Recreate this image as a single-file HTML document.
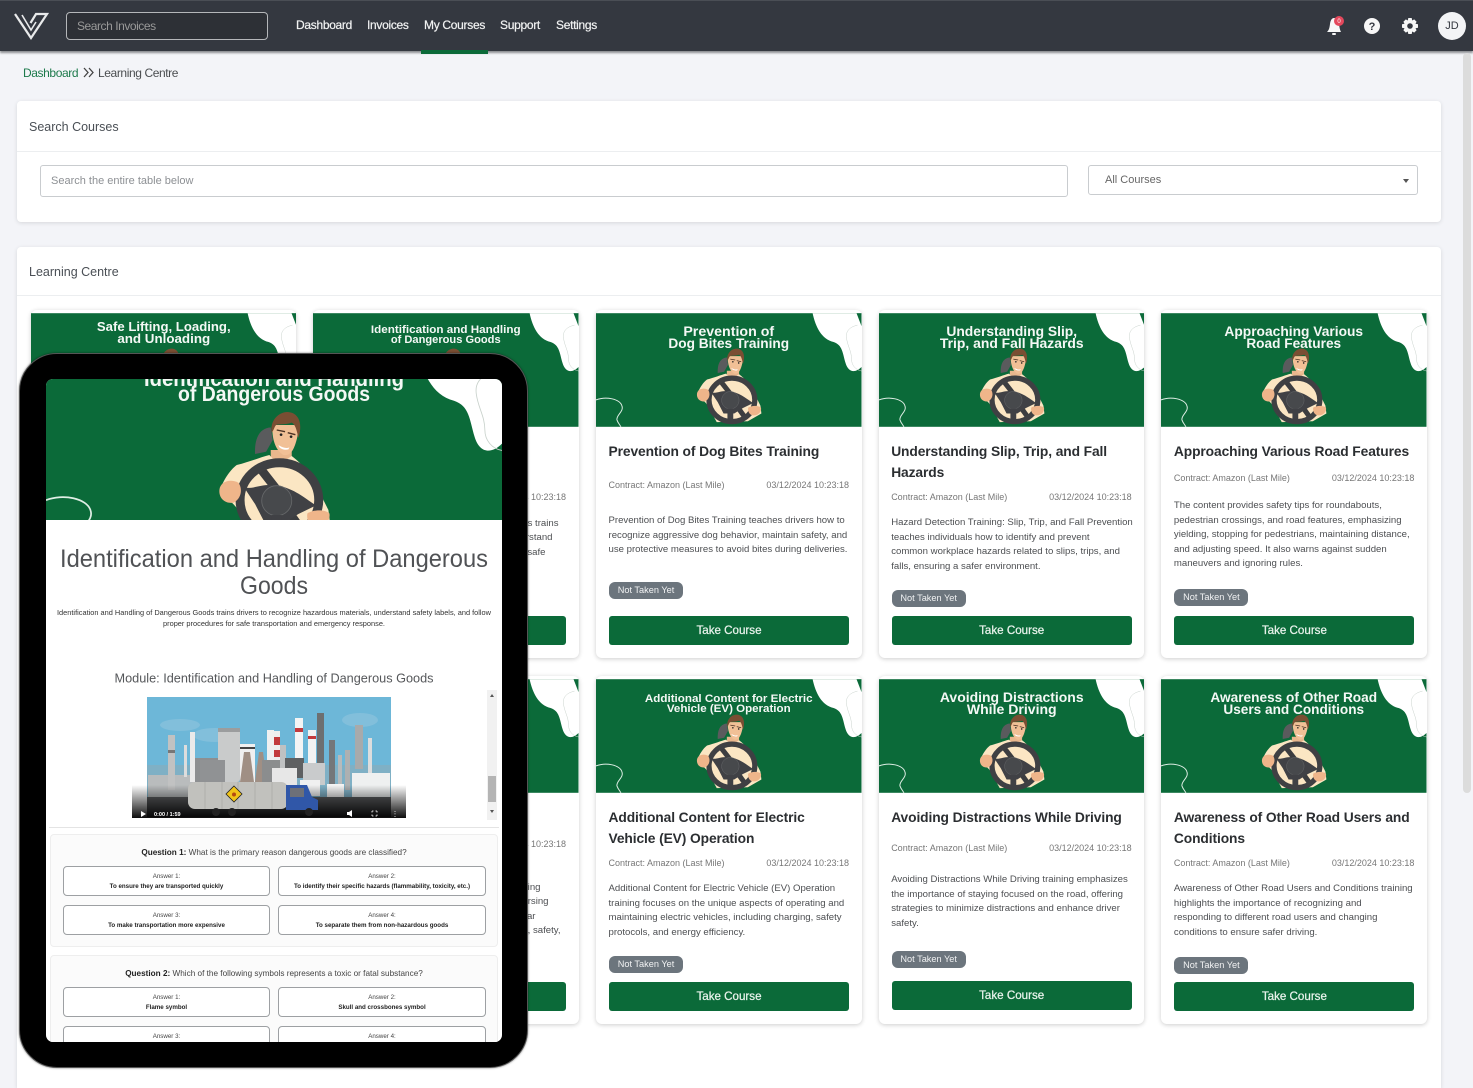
<!DOCTYPE html>
<html lang="en"><head><meta charset="utf-8"><title>Learning Centre</title>
<style>
*{box-sizing:border-box}
html,body{margin:0;padding:0;width:1473px;height:1088px;overflow:hidden;background:#f3f4f8;font-family:"Liberation Sans",sans-serif;color:#333}
#root{position:absolute;left:0;top:0;width:1473px;height:1088px;overflow:hidden}
.abs,.card,.panel{position:absolute}
header{position:absolute;left:0;top:0;width:1473px;height:51px;background:#343840;box-shadow:inset 0 1px 0 #4a4e55,0 2px 2px #8b8d90}
.nav{position:absolute;top:17px;font-size:12px;line-height:16px;color:#f2f3f3;white-space:nowrap;letter-spacing:-.3px;-webkit-text-stroke:.2px #f2f3f3}
.sb{position:absolute;left:66px;top:12px;width:202px;height:28px;border:1px solid #b5b7ba;border-radius:4px;background:#2d3036;color:#999;font-size:12px;line-height:26px;padding-left:10px;letter-spacing:-.45px}
.panel{background:#fff;border-radius:4px;box-shadow:0 1px 4px rgba(0,0,0,.12);left:17px;width:1424px}
.ph{position:absolute;left:12px;font-size:12.5px;line-height:16px;color:#4a4f55}
.hr{position:absolute;left:0;width:100%;height:1px;background:#eceef0}
.card{width:265.5px;height:348px;background:#fff;border-radius:6px;box-shadow:0 1px 5px rgba(0,0,0,.2)}
.bn{position:absolute;left:0;top:3px;width:265.5px;height:114px;display:block}
.bn text,.tb text{font-family:"Liberation Sans",sans-serif;font-weight:700;fill:#f4f8f5;text-anchor:middle}
.t{position:absolute;left:12.5px;margin-top:.5px;width:245px;font-size:13.8px;line-height:21px;font-weight:700;color:#2b2e31;white-space:nowrap;letter-spacing:-.1px}
.m{position:absolute;left:12.5px;width:240.5px;font-size:9px;line-height:14px;color:#777;white-space:nowrap}
.m b{position:absolute;right:0;top:0;font-weight:400}
.d{position:absolute;left:12.5px;margin-top:1.5px;font-size:9.6px;line-height:14.5px;color:#4d4f52;white-space:nowrap}
.bd{position:absolute;left:13px;height:17px;width:74px;background:#6c757d;border-radius:6px;color:#f1f2f3;font-size:9.2px;line-height:17px;text-align:center}
.btn{position:absolute;left:13px;width:240px;height:29px;background:#0b6a39;border-radius:3px;color:#e9f3ec;font-size:11.6px;line-height:30px;text-align:center;-webkit-text-stroke:.25px #e9f3ec}
.tablet{position:absolute;left:19px;top:353px;width:509px;height:715px;background:#000;border-radius:38px;border:1px solid #555;box-shadow:0 0 2px rgba(0,0,0,.5)}
.screen{position:absolute;left:26px;top:25px;width:456px;height:663px;background:#fff;border-radius:7px;overflow:hidden}
.q{position:absolute;left:4px;width:448px;background:#fbfbfb;border:1px solid #eee;border-radius:4px}
.qt{position:absolute;left:0;width:100%;text-align:center;font-size:8.2px;line-height:12px;color:#444;white-space:nowrap}
.qt b{color:#222}
.a{position:absolute;height:30px;background:#fff;border:1px solid #9da0a3;border-radius:4px;text-align:center;font-size:6.2px;line-height:9.5px;color:#444;padding-top:5px;white-space:nowrap}
.a b{display:block;color:#222}
</style></head>
<body>
<div id="root">
<svg width="0" height="0" style="position:absolute">
<defs>
<symbol id="art" viewBox="0 0 266 114">
<rect width="266" height="114" fill="#0b6a39"/>
<path d="M217 0C220 14 226 26 238 29C247 32 247 40 250 50C253 60 260 60 266 54V0Z" fill="#fff"/>
<path d="M261 0L266 13V0Z" fill="#0b6a39"/>
<path d="M262 12C254 14 250 18 251 25C252 33 256 38 256 46C256 52 260 57 266 58" fill="none" stroke="#c9d2cc" stroke-width=".5"/>
<path d="M0 87C10 83 24 86 26 93C28 99 20 102 21 107C22 110 24 112 25 114" fill="none" stroke="#dfeee5" stroke-width="1"/>
<g transform="translate(-15.17 -.62) scale(.1945)">
<path d="M752 232C715 235 703 270 705 312L738 305L758 270Z" fill="#5a5b5d"/>
<path d="M752 300H815V350H752Z" fill="#e9b78d"/>
<path d="M650 345C690 335 720 322 748 315L775 345L815 318C850 345 880 380 895 420L925 480L930 520L860 560L700 565L670 510C660 470 620 450 600 420C610 390 630 360 650 345Z" fill="#fbe6c3"/>
<path d="M757 225C755 265 765 300 790 315C815 320 825 290 832 260L835 225Z" fill="#f1c096"/>
<path d="M755 248C748 205 785 180 810 187C838 192 848 225 835 264C830 240 825 222 815 218C795 225 775 222 768 225C762 232 762 240 755 248Z" fill="#7a4e33"/>
<path d="M770 240L795 245M803 248L826 254" stroke="#4d3325" stroke-width="4"/>
<circle cx="783" cy="254" r="4" fill="#222"/><circle cx="813" cy="260" r="4" fill="#222"/>
<path d="M775 285Q795 298 808 292L805 298Q790 302 778 292Z" fill="#fff"/>
<path d="M715 348L775 425M795 470L845 540" stroke="#3c3d40" stroke-width="26" fill="none"/>
<path d="M672 412C700 420 730 396 780 408C830 420 860 450 888 466L835 492L790 520L735 520L705 462Z" fill="#404145"/>
<circle cx="770" cy="452" r="45" fill="#47494c" stroke="#66686a" stroke-width="2.500"/>
<path d="M770 495V565" stroke="#404145" stroke-width="30"/>
<ellipse cx="778" cy="450" rx="118" ry="112" fill="none" stroke="#3f4043" stroke-width="27"/>
<path d="M598 420C600 395 630 385 655 398C668 415 665 445 640 458C615 462 596 445 598 420Z" fill="#efb58a"/>
<path d="M862 490C880 478 915 478 928 490C932 510 915 530 890 530C870 530 858 510 862 490Z" fill="#efb58a"/>
</g>
</symbol>
</defs>
</svg>

<header>
<svg class="abs" style="left:13px;top:12px" width="36" height="28" viewBox="0 0 36 28"><path d="M2 2L18 26L34 2H23L17.500 11" fill="none" stroke="#e9eaeb" stroke-width="2.200"/><path d="M9 3L18 18L23 10" fill="none" stroke="#e9eaeb" stroke-width="1.600"/></svg>
<div class="sb">Search Invoices</div>
<div class="nav" style="left:296px">Dashboard</div>
<div class="nav" style="left:367px">Invoices</div>
<div class="nav" style="left:424px">My Courses</div>
<div class="nav" style="left:500px">Support</div>
<div class="nav" style="left:556px">Settings</div>
<div class="abs" style="left:421px;top:50px;width:67px;height:4px;background:#0b6a39"></div>
<svg class="abs" style="left:1320px;top:10px" width="30" height="30" viewBox="0 0 30 30">
<path d="M7 22C9 20 9.500 18 10 14C10.500 10 12 8 14 8C17 8 18.500 10 19 14C19.500 18 20 20 21 22Z" fill="#f7f7f7"/><rect x="12" y="23" width="4" height="2" rx="1" fill="#f7f7f7"/>
<circle cx="19" cy="11" r="5" fill="#e4485c"/><text x="19" y="13" font-size="6" fill="#fff" text-anchor="middle" font-family="Liberation Sans">0</text></svg>
<svg class="abs" style="left:1362px;top:16px" width="20" height="20"><circle cx="10" cy="10" r="8" fill="#f7f7f7"/><text x="10" y="14" font-size="11" font-weight="700" fill="#343840" text-anchor="middle" font-family="Liberation Sans">?</text></svg>
<svg class="abs" style="left:1400px;top:16px" width="20" height="20" viewBox="0 0 20 20"><path d="M8.300 2H11.700L12.200 4.500L14.200 3.400L16.600 5.800L15.500 7.800L18 8.300V11.700L15.500 12.200L16.600 14.200L14.200 16.600L12.200 15.500L11.700 18H8.300L7.800 15.500L5.800 16.600L3.400 14.200L4.500 12.200L2 11.700V8.300L4.500 7.800L3.400 5.800L5.800 3.400L7.800 4.500Z" fill="#f7f7f7"/><circle cx="10" cy="10" r="2.800" fill="#343840"/></svg>
<div class="abs" style="left:1438px;top:12px;width:28px;height:28px;border-radius:50%;background:#f3f4f6;color:#343840;font-size:11px;line-height:28px;text-align:center">JD</div>
</header>

<div class="abs" style="left:23px;top:65px;font-size:12px;line-height:16px;color:#1d7a4c;letter-spacing:-.4px">Dashboard</div>
<svg class="abs" style="left:83px;top:67px" width="11" height="11"><path d="M1 1L5 5.500L1 10M6 1L10 5.500L6 10" fill="none" stroke="#444" stroke-width="1.300"/></svg>
<div class="abs" style="left:98px;top:65px;font-size:12px;line-height:16px;color:#4a4d50;letter-spacing:-.4px;white-space:nowrap">Learning Centre</div>

<div class="abs" style="left:1463px;top:53px;width:8px;height:740px;background:#dcdcdc;border-radius:4px"></div>

<div class="panel" style="top:101px;height:121px">
<div class="ph" style="top:18px">Search Courses</div>
<div class="hr" style="top:50px"></div>
<div class="abs" style="left:23px;top:64px;width:1028px;height:32px;border:1px solid #c9cccf;border-radius:3px;color:#8d9094;font-size:11px;line-height:30px;padding-left:10px">Search the entire table below</div>
<div class="abs" style="left:1071px;top:64px;width:330px;height:30px;border:1px solid #c9cccf;border-radius:3px;color:#666;font-size:11px;line-height:28px;padding-left:16px">All Courses<span class="abs" style="right:8px;top:13px;width:0;height:0;border:3px solid transparent;border-top:4px solid #555"></span></div>
</div>

<div class="panel" style="top:247px;height:841px;border-radius:4px 4px 0 0">
<div class="ph" style="top:17px">Learning Centre</div>
<div class="hr" style="top:48px"></div>
</div>

<!-- row 1 -->
<div class="card" style="left:30.500px;top:310px">
<svg class="bn" viewBox="0 0 266 114"><use href="#art" width="266" height="114"/><text x="133" y="18" font-size="13" textLength="134" lengthAdjust="spacingAndGlyphs">Safe Lifting, Loading,</text><text x="133" y="30" font-size="13" textLength="93" lengthAdjust="spacingAndGlyphs">and Unloading</text></svg>
</div>

<div class="card" style="left:313px;top:310px">
<svg class="bn" viewBox="0 0 266 114"><use href="#art" width="266" height="114"/><text x="133" y="20" font-size="11" textLength="150" lengthAdjust="spacingAndGlyphs">Identification and Handling</text><text x="133" y="30" font-size="11" textLength="110" lengthAdjust="spacingAndGlyphs">of Dangerous Goods</text></svg>
<div class="m" style="top:180px"><b>03/12/2024 10:23:18</b></div>
<div class="d" style="left:auto;right:20px;top:205px;text-align:right">Goods trains<br>understand<span style="margin-right:6px"></span><br>follow safe<span style="margin-right:13px"></span></div>
<div class="btn" style="top:306px">Take Course</div>
</div>

<div class="card" style="left:596px;top:310px">
<svg class="bn" viewBox="0 0 266 114"><use href="#art" width="266" height="114"/><text x="133" y="23" font-size="13.500" textLength="91" lengthAdjust="spacingAndGlyphs">Prevention of</text><text x="133" y="35" font-size="13.500" textLength="121" lengthAdjust="spacingAndGlyphs">Dog Bites Training</text></svg>
<div class="t" style="top:130.500px">Prevention of Dog Bites Training</div>
<div class="m" style="top:168px">Contract: Amazon (Last Mile)<b>03/12/2024 10:23:18</b></div>
<div class="d" style="top:202.750px">Prevention of Dog Bites Training teaches drivers how to<br>recognize aggressive dog behavior, maintain safety, and<br>use protective measures to avoid bites during deliveries.</div>
<div class="bd" style="top:272px">Not Taken Yet</div>
<div class="btn" style="top:306px">Take Course</div>
</div>

<div class="card" style="left:878.700px;top:310px">
<svg class="bn" viewBox="0 0 266 114"><use href="#art" width="266" height="114"/><text x="133" y="23" font-size="13.500" textLength="131" lengthAdjust="spacingAndGlyphs">Understanding Slip,</text><text x="133" y="35" font-size="13.500" textLength="144" lengthAdjust="spacingAndGlyphs">Trip, and Fall Hazards</text></svg>
<div class="t" style="top:130.500px">Understanding Slip, Trip, and Fall<br>Hazards</div>
<div class="m" style="top:180px">Contract: Amazon (Last Mile)<b>03/12/2024 10:23:18</b></div>
<div class="d" style="top:204.750px">Hazard Detection Training: Slip, Trip, and Fall Prevention<br>teaches individuals how to identify and prevent<br>common workplace hazards related to slips, trips, and<br>falls, ensuring a safer environment.</div>
<div class="bd" style="top:280px">Not Taken Yet</div>
<div class="btn" style="top:306px">Take Course</div>
</div>

<div class="card" style="left:1161.400px;top:310px">
<svg class="bn" viewBox="0 0 266 114"><use href="#art" width="266" height="114"/><text x="133" y="23" font-size="13.500" textLength="139" lengthAdjust="spacingAndGlyphs">Approaching Various</text><text x="133" y="35" font-size="13.500" textLength="95" lengthAdjust="spacingAndGlyphs">Road Features</text></svg>
<div class="t" style="top:130.500px">Approaching Various Road Features</div>
<div class="m" style="top:161px">Contract: Amazon (Last Mile)<b>03/12/2024 10:23:18</b></div>
<div class="d" style="top:187.750px">The content provides safety tips for roundabouts,<br>pedestrian crossings, and road features, emphasizing<br>yielding, stopping for pedestrians, maintaining distance,<br>and adjusting speed. It also warns against sudden<br>maneuvers and ignoring rules.</div>
<div class="bd" style="top:279px">Not Taken Yet</div>
<div class="btn" style="top:306px">Take Course</div>
</div>

<!-- row 2 -->
<div class="card" style="left:313px;top:676px">
<svg class="bn" viewBox="0 0 266 114"><use href="#art" width="266" height="114"/></svg>
<div class="m" style="top:161px"><b>03/12/2024 10:23:18</b></div>
<div class="d" style="left:auto;right:18px;top:203px;text-align:right">during training<span style="margin-right:20px"></span><br>nursing<span style="margin-right:12px"></span><br>similar<span style="margin-right:25px"></span><br>of road, safety,</div>
<div class="btn" style="top:306px">Take Course</div>
</div>

<div class="card" style="left:596px;top:676px">
<svg class="bn" viewBox="0 0 266 114"><use href="#art" width="266" height="114"/><text x="133" y="23" font-size="11.500" textLength="168" lengthAdjust="spacingAndGlyphs">Additional Content for Electric</text><text x="133" y="33" font-size="11.500" textLength="124" lengthAdjust="spacingAndGlyphs">Vehicle (EV) Operation</text></svg>
<div class="t" style="top:130.500px">Additional Content for Electric<br>Vehicle (EV) Operation</div>
<div class="m" style="top:180px">Contract: Amazon (Last Mile)<b>03/12/2024 10:23:18</b></div>
<div class="d" style="top:204.750px">Additional Content for Electric Vehicle (EV) Operation<br>training focuses on the unique aspects of operating and<br>maintaining electric vehicles, including charging, safety<br>protocols, and energy efficiency.</div>
<div class="bd" style="top:280px">Not Taken Yet</div>
<div class="btn" style="top:306px">Take Course</div>
</div>

<div class="card" style="left:878.700px;top:676px">
<svg class="bn" viewBox="0 0 266 114"><use href="#art" width="266" height="114"/><text x="133" y="23" font-size="13.500" textLength="144" lengthAdjust="spacingAndGlyphs">Avoiding Distractions</text><text x="133" y="35" font-size="13.500" textLength="90" lengthAdjust="spacingAndGlyphs">While Driving</text></svg>
<div class="t" style="top:130.500px">Avoiding Distractions While Driving</div>
<div class="m" style="top:165px">Contract: Amazon (Last Mile)<b>03/12/2024 10:23:18</b></div>
<div class="d" style="top:195.750px">Avoiding Distractions While Driving training emphasizes<br>the importance of staying focused on the road, offering<br>strategies to minimize distractions and enhance driver<br>safety.</div>
<div class="bd" style="top:275px">Not Taken Yet</div>
<div class="btn" style="top:305px">Take Course</div>
</div>

<div class="card" style="left:1161.400px;top:676px">
<svg class="bn" viewBox="0 0 266 114"><use href="#art" width="266" height="114"/><text x="133" y="23" font-size="13.500" textLength="167" lengthAdjust="spacingAndGlyphs">Awareness of Other Road</text><text x="133" y="35" font-size="13.500" textLength="141" lengthAdjust="spacingAndGlyphs">Users and Conditions</text></svg>
<div class="t" style="top:130.500px">Awareness of Other Road Users and<br>Conditions</div>
<div class="m" style="top:180px">Contract: Amazon (Last Mile)<b>03/12/2024 10:23:18</b></div>
<div class="d" style="top:204.750px">Awareness of Other Road Users and Conditions training<br>highlights the importance of recognizing and<br>responding to different road users and changing<br>conditions to ensure safer driving.</div>
<div class="bd" style="top:281px">Not Taken Yet</div>
<div class="btn" style="top:306px">Take Course</div>
</div>

<!-- tablet -->
<div class="tablet">
<div class="screen">
<svg class="tb abs" style="left:0;top:0" width="456" height="141" viewBox="0 16.300 266 82.250" preserveAspectRatio="none"><use href="#art" width="266" height="114"/></svg>
<svg class="tb abs" style="left:0;top:0" width="456" height="141"><text x="228" y="7" font-size="21" textLength="260" lengthAdjust="spacingAndGlyphs">Identification and Handling</text><text x="228" y="22" font-size="21" textLength="192" lengthAdjust="spacingAndGlyphs">of Dangerous Goods</text></svg>

<svg class="abs" style="left:0;top:162px" width="456" height="90">
<text x="228" y="26" font-family="Liberation Sans" font-size="25" fill="#505255" text-anchor="middle" textLength="428" lengthAdjust="spacingAndGlyphs">Identification and Handling of Dangerous</text>
<text x="228" y="53" font-family="Liberation Sans" font-size="25" fill="#505255" text-anchor="middle" textLength="68" lengthAdjust="spacingAndGlyphs">Goods</text>
</svg>
<svg class="abs" style="left:0;top:226px" width="456" height="30" font-family="Liberation Sans" fill="#333" font-size="7.500" text-anchor="middle">
<text x="228" y="10" textLength="434" lengthAdjust="spacingAndGlyphs">Identification and Handling of Dangerous Goods trains drivers to recognize hazardous materials, understand safety labels, and follow</text>
<text x="228" y="21" textLength="222" lengthAdjust="spacingAndGlyphs">proper procedures for safe transportation and emergency response.</text>
</svg>
<svg class="abs" style="left:0;top:288px" width="456" height="24"><text x="228" y="15.500" font-family="Liberation Sans" font-size="13" fill="#55575a" text-anchor="middle" textLength="319" lengthAdjust="spacingAndGlyphs">Module: Identification and Handling of Dangerous Goods</text></svg>

<!-- video -->
<svg class="abs" style="left:86px;top:318px" width="274" height="121" viewBox="132 697 274 121">
<defs><linearGradient id="vg" x1="0" y1="0" x2="0" y2="1"><stop offset="0" stop-color="#000" stop-opacity="0"/><stop offset="1" stop-color="#000" stop-opacity=".95"/></linearGradient></defs>
<rect x="147" y="697" width="244" height="100" fill="#6db7d8"/>
<ellipse cx="180" cy="725" rx="20" ry="6" fill="#82bfdb"/><ellipse cx="360" cy="720" rx="18" ry="7" fill="#82bfdb"/><ellipse cx="215" cy="735" rx="22" ry="7" fill="#82bfdb"/>
<rect x="147" y="765" width="244" height="32" fill="#7fb0c5"/>
<rect x="148" y="775" width="50" height="22" fill="#b9bcbd"/><rect x="195" y="758" width="35" height="39" fill="#8d8f91"/>
<rect x="168" y="735" width="7" height="55" fill="#c1c2c2"/><rect x="168" y="750" width="7" height="3" fill="#777"/>
<rect x="184" y="745" width="3" height="32" fill="#ddd"/><rect x="190" y="732" width="5" height="50" fill="#eaeaea"/>
<rect x="218" y="728" width="22" height="54" rx="3" fill="#c9cbcb"/><rect x="218" y="728" width="22" height="4" fill="#9b9d9e"/><rect x="200" y="760" width="25" height="24" fill="#909294"/>
<rect x="240" y="744" width="15" height="38" fill="#f0f0f0"/><rect x="240" y="747" width="15" height="2" fill="#444"/>
<rect x="267" y="730" width="7" height="30" fill="#f0f0f0"/><rect x="274" y="731" width="6" height="30" fill="#eee"/><rect x="274" y="737" width="6" height="8" fill="#c23a3d"/><rect x="274" y="750" width="6" height="7" fill="#c23a3d"/>
<path d="M240 782L244 752H250L254 782ZM255 782L259 752H263L267 782Z" fill="#a08f84"/>
<rect x="262" y="760" width="30" height="25" fill="#8b8d8e"/>
<rect x="280" y="745" width="6" height="25" fill="#bfc1c2"/>
<rect x="295" y="718" width="8" height="44" fill="#f4f4f4"/><rect x="295" y="728" width="8" height="4" fill="#c23a3d"/>
<rect x="308" y="730" width="8" height="35" fill="#f2f2f2"/><rect x="308" y="736" width="8" height="3" fill="#c23a3d"/>
<rect x="317" y="713" width="7" height="55" fill="#6d6f70"/>
<rect x="285" y="758" width="19" height="20" fill="#5e6062"/><rect x="272" y="768" width="25" height="18" fill="#e7e7e7"/>
<rect x="303" y="763" width="22" height="22" fill="#c9cbcc"/><rect x="329" y="740" width="6" height="44" fill="#74777a"/>
<rect x="338" y="755" width="4" height="34" fill="#b7babb"/><rect x="345" y="750" width="5" height="40" fill="#aeb0b1"/><rect x="355" y="725" width="8" height="44" fill="#a8aaab"/><rect x="368" y="738" width="4" height="36" fill="#ddd"/>
<rect x="352" y="773" width="38" height="24" fill="#eef0f0"/><rect x="327" y="784" width="17" height="13" fill="#f4f4f4"/><rect x="300" y="780" width="20" height="16" fill="#f0f0f0"/>
<rect x="147" y="797" width="244" height="20" fill="#5e6062"/>
<rect x="132" y="785" width="274" height="33" fill="url(#vg)"/>
<rect x="188" y="782" width="100" height="27" rx="7" fill="#c1c1bd"/>
<path d="M205 782v27M222 782v27M238 782v27M255 782v27M272 782v27" stroke="#a4a4a1" stroke-width=".6"/>
<path d="M234 786L242 794L234 802L226 794Z" fill="#f0c419" stroke="#222" stroke-width=".8"/><circle cx="234" cy="794.500" r="2" fill="#b34a12"/>
<path d="M286 785H307L312 797L318 800V810H286Z" fill="#3057a8"/><rect x="290" y="788" width="14" height="9" fill="#6d7078"/>
<circle cx="216" cy="812" r="4" fill="#222"/><circle cx="232" cy="812" r="4" fill="#222"/><circle cx="309" cy="812" r="4" fill="#222"/>
<path d="M141 811L146 814L141 817Z" fill="#fff"/><text x="154" y="816" font-size="5.500" fill="#fff" font-family="Liberation Sans" font-weight="700">0:00 / 1:59</text>
<path d="M347 812H349L352 810V817L349 815H347Z" fill="#fff"/><path d="M372 811h1.500M372 811v1.500M377 811h-1.500M377 811v1.500M372 816h1.500M372 816v-1.500M377 816h-1.500M377 816v-1.500" stroke="#fff" stroke-width=".8"/>
<path d="M395 811v.8M395 813.500v.8M395 816v.8" stroke="#fff" stroke-width="1"/>
</svg>
<!-- scrollbar -->
<div class="abs" style="left:441px;top:311px;width:10px;height:130px;background:#f1f1f1"></div>
<div class="abs" style="left:442px;top:397px;width:8px;height:26px;background:#b4b4b4"></div>
<div class="abs" style="left:444px;top:315px;border:2.500px solid transparent;border-bottom:3px solid #555;border-top:0"></div>
<div class="abs" style="left:444px;top:431px;border:2.500px solid transparent;border-top:3px solid #555;border-bottom:0"></div>
<div class="abs" style="left:3px;top:448px;width:450px;height:1px;background:#e4e4e4"></div>

<div class="q" style="top:455px;height:113px">
<div class="qt" style="top:12px"><b>Question 1:</b> What is the primary reason dangerous goods are classified?</div>
<div class="a" style="left:12px;top:31px;width:207px">Answer 1:<b>To ensure they are transported quickly</b></div>
<div class="a" style="left:227px;top:31px;width:208px">Answer 2:<b>To identify their specific hazards (flammability, toxicity, etc.)</b></div>
<div class="a" style="left:12px;top:70px;width:207px">Answer 3:<b>To make transportation more expensive</b></div>
<div class="a" style="left:227px;top:70px;width:208px">Answer 4:<b>To separate them from non-hazardous goods</b></div>
</div>
<div class="q" style="top:576px;height:110px">
<div class="qt" style="top:12px"><b>Question 2:</b> Which of the following symbols represents a toxic or fatal substance?</div>
<div class="a" style="left:12px;top:31px;width:207px">Answer 1:<b>Flame symbol</b></div>
<div class="a" style="left:227px;top:31px;width:208px">Answer 2:<b>Skull and crossbones symbol</b></div>
<div class="a" style="left:12px;top:70px;width:207px">Answer 3:</div>
<div class="a" style="left:227px;top:70px;width:208px">Answer 4:</div>
</div>
</div>
</div>
</div>
</body></html>
